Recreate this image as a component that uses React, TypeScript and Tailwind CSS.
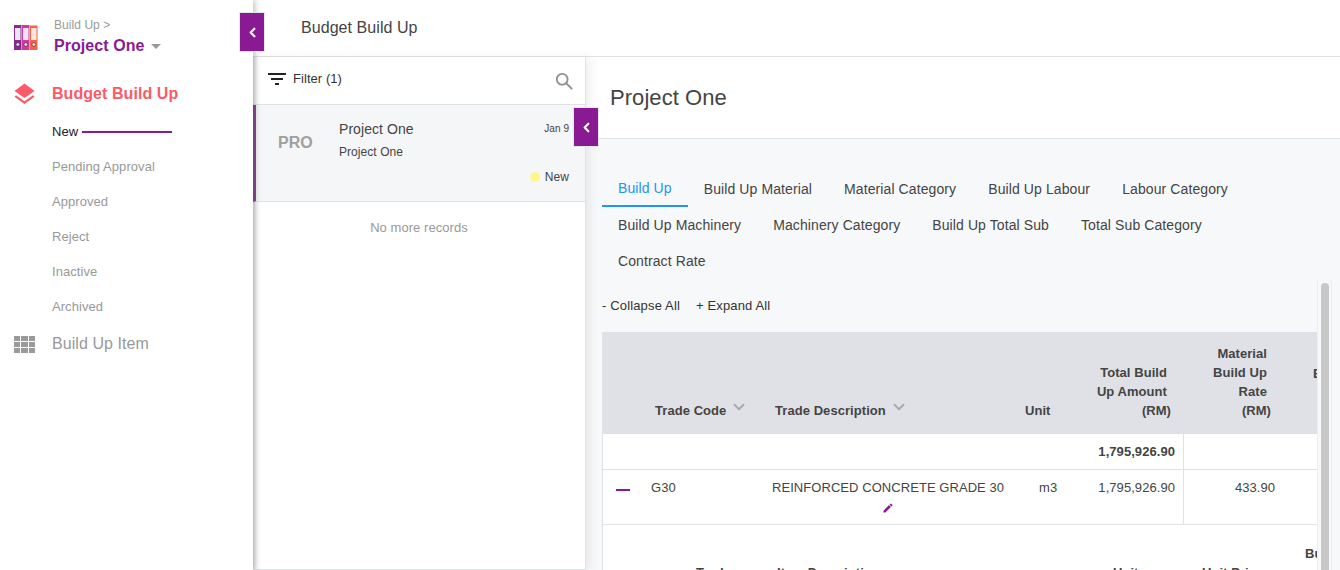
import { ChevronLeft, ChevronDown } from 'lucide-react'

const subItems = ['Pending Approval', 'Approved', 'Reject', 'Inactive', 'Archived']

const tabRows = [
  ['Build Up', 'Build Up Material', 'Material Category', 'Build Up Labour', 'Labour Category'],
  ['Build Up Machinery', 'Machinery Category', 'Build Up Total Sub', 'Total Sub Category'],
  ['Contract Rate'],
]

function CollapseButton() {
  return (
    <button className="w-[26px] h-[40px] flex items-center justify-center bg-[#8a1a94] border border-[#e4e6ea] text-white">
      <ChevronLeft size={15} strokeWidth={3.5} />
    </button>
  )
}

function BinderLogo() {
  return (
    <svg width="24" height="26" viewBox="0 0 24 26">
      <rect x="0" y="0" width="7.5" height="25" fill="#8a2a90" />
      <rect x="8" y="0" width="7.5" height="25" fill="#d03a9e" />
      <rect x="16" y="0.5" width="7.5" height="24.5" fill="#f2644a" />
      <rect x="1" y="3" width="5.5" height="12" fill="#e8e6f0" />
      <rect x="9" y="3" width="5.5" height="12" fill="#f0e4f0" />
      <rect x="17" y="3" width="5.5" height="12" fill="#f8e8e0" />
      <circle cx="3.8" cy="19.5" r="1.8" fill="#e5e5e5" stroke="#333" strokeWidth="0.6" />
      <circle cx="11.8" cy="19.5" r="1.8" fill="#e5e5e5" stroke="#333" strokeWidth="0.6" />
      <circle cx="19.8" cy="19.5" r="1.8" fill="#e5e5e5" stroke="#333" strokeWidth="0.6" />
    </svg>
  )
}

function Sidebar() {
  return (
    <aside className="w-[253px] shrink-0 bg-white shadow-[2px_0_6px_rgba(0,0,0,0.25)] z-20 relative">
      <div className="flex items-start pl-[14px] pt-[18px] h-[72px]">
        <div className="mt-[7px]">
          <BinderLogo />
        </div>
        <div className="ml-[16px]">
          <div className="text-[12px] leading-[14px] text-[#999]">Build Up &gt;</div>
          <div className="flex items-center mt-[4px]">
            <span className="text-[16px] leading-[20px] font-bold text-[#8a1a94]">Project One</span>
            <span className="ml-[7px] mt-[1px] w-0 h-0 border-x-[5px] border-x-transparent border-t-[5px] border-t-[#999]" />
          </div>
        </div>
      </div>

      <div className="flex items-center pl-[14px] mt-[10px] h-[24px]">
        <svg width="21" height="22" viewBox="0 0 21 22" fill="#fb5a66">
          <path d="M10.5 0.5 L20.5 8 L10.5 15 L0.5 8 Z" />
          <path d="M2 12.3 L0.5 13.7 L10.5 21 L20.5 13.7 L19 12.3 L10.5 18.3 Z" />
        </svg>
        <span className="ml-[17px] text-[16px] font-bold text-[#fb5a66]">Budget Build Up</span>
      </div>

      <div className="flex items-center pl-[52px] mt-[16px] h-[20px]">
        <span className="text-[13px] text-[#222]">New</span>
        <span className="ml-[4px] w-[90px] h-[2px] bg-[#8a1a94]" />
      </div>
      {subItems.map((item) => (
        <div key={item} className="pl-[52px] mt-[15px] h-[20px] flex items-center text-[13px] text-[#999]">
          {item}
        </div>
      ))}

      <div className="flex items-center pl-[14px] mt-[15px] h-[24px]">
        <div className="grid grid-cols-3 gap-[1px] w-[21px]">
          {Array.from({ length: 9 }).map((_, i) => (
            <span key={i} className="h-[5px] bg-[#9a9a9a]" />
          ))}
        </div>
        <span className="ml-[17px] text-[16px] text-[#999]">Build Up Item</span>
      </div>
    </aside>
  )
}

function ListPanel() {
  return (
    <section className="w-[333px] shrink-0 bg-white border-r border-b border-[#dfe2e6] shadow-[inset_6px_0_6px_-6px_rgba(0,0,0,0.2),5px_0_10px_rgba(0,0,0,0.06)] relative z-10 h-[513px]">
      <div className="h-[48px] flex items-center pl-[15px] pr-[12px] border-b border-[#dfe2e6]">
        <div className="flex items-center mb-[3px]">
          <svg width="18" height="12" viewBox="0 0 18 12" fill="#222">
            <rect x="0" y="0" width="18" height="2" />
            <rect x="3" y="5" width="12" height="2" />
            <rect x="7" y="10" width="4" height="2" />
          </svg>
          <span className="ml-[7px] text-[13px] text-[#333]">Filter (1)</span>
        </div>
        <svg className="ml-auto" width="18" height="18" viewBox="0 0 20 20" fill="none" stroke="#8f8f8f" strokeWidth="2">
          <circle cx="8" cy="8" r="6" />
          <path d="M12.5 12.5 L19 19" />
        </svg>
      </div>
      <div className="h-[97px] flex bg-[#f5f6f8] border-l-[3px] border-l-[#8e4a9a] border-b border-b-[#dfe2e6]">
        <div className="w-[83px] pt-[28px] pl-[22px] text-[16px] font-bold text-[#a0a0a0] leading-[20px]">PRO</div>
        <div className="flex-1 pt-[16px] pr-[16px]">
          <div className="flex justify-between">
            <span className="text-[14px] leading-[17px] text-[#444]">Project One</span>
            <span className="text-[10px] leading-[14px] mt-[1px] text-[#444]">Jan 9</span>
          </div>
          <div className="mt-[7px] text-[12px] leading-[14px] text-[#444]">Project One</div>
          <div className="flex items-center justify-end mt-[11px]">
            <span className="w-[10px] h-[10px] rounded-full bg-[#fdf68f]" />
            <span className="ml-[5px] text-[12px] leading-[14px] text-[#444]">New</span>
          </div>
        </div>
      </div>
      <div className="mt-[16px] text-center text-[13px] text-[#999]">No more records</div>
      <div className="absolute top-[50px] -right-[14px] z-20">
        <CollapseButton />
      </div>
    </section>
  )
}

function Tabs() {
  return (
    <div className="px-[16px] mt-[32px]">
      {tabRows.map((row, r) => (
        <div key={r} className="flex h-[36px]">
          {row.map((tab) => (
            <div
              key={tab}
              className={`px-[16px] h-[36px] flex items-center text-[14px] tracking-[0.1px] ${
                tab === 'Build Up' ? 'text-[#2196f3] border-b-2 border-[#2196f3]' : 'text-[#444]'
              }`}
            >
              {tab}
            </div>
          ))}
        </div>
      ))}
    </div>
  )
}

function BuildUpTable() {
  return (
    <div className="flex-1 min-w-0 overflow-hidden">
      <div className="w-[900px] text-[13px] text-[#444] border-l border-[#dfe2e6]">
        <div className="flex items-end h-[102px] bg-[#dfe1e6] font-bold text-[13px] leading-[19px] pb-[14px]">
          <div className="w-[52px]" />
          <div className="w-[120px] flex items-end">
            Trade Code
            <ChevronDown size={18} strokeWidth={2.5} className="ml-[4px] mb-[4px] text-[#aaa]" />
          </div>
          <div className="w-[250px] flex items-end">
            Trade Description
            <ChevronDown size={18} strokeWidth={2.5} className="ml-[4px] mb-[4px] text-[#aaa]" />
          </div>
          <div className="w-[50px]">Unit</div>
          <div className="w-[96px] text-right">
            <div className="mr-[4px]">Total Build</div>
            <div className="mr-[4px]">Up Amount</div>
            <div>(RM)</div>
          </div>
          <div className="w-[100px] text-right">
            <div className="mr-[4px]">Material</div>
            <div className="mr-[4px]">Build Up</div>
            <div className="mr-[4px]">Rate</div>
            <div>(RM)</div>
          </div>
          <div className="ml-[42px] self-center mb-[6px]">Bu</div>
        </div>
        <div className="flex h-[36px] items-center bg-white border-b border-[#dfe2e6]">
          <div className="w-[580px] text-right pr-[8px] font-bold">1,795,926.90</div>
          <div className="h-full border-l border-[#dfe2e6]" />
        </div>
        <div className="flex h-[55px] bg-white border-b border-[#dfe2e6]">
          <div className="w-[48px] pt-[19px] pl-[13px]">
            <div className="w-[14px] h-[2px] bg-[#8a1a94]" />
          </div>
          <div className="w-[121px] pt-[8px]">G30</div>
          <div className="w-[253px] pt-[8px]">
            <div>REINFORCED CONCRETE GRADE 30</div>
            <svg className="ml-[110px] mt-[4px]" width="12" height="12" viewBox="0 0 24 24" fill="#8a1a94">
              <path d="M3 17.25V21h3.75L17.81 9.94l-3.75-3.75L3 17.25zM20.71 7.04a1 1 0 0 0 0-1.41l-2.34-2.34a1 1 0 0 0-1.41 0l-1.83 1.83 3.75 3.75 1.83-1.83z" />
            </svg>
          </div>
          <div className="w-[50px] pt-[8px] pl-[14px]">m3</div>
          <div className="w-[108px] pt-[8px] text-right pr-[8px]">1,795,926.90</div>
          <div className="w-[120px] pt-[8px] border-l border-[#dfe2e6] text-right pr-[28px]">433.90</div>
        </div>
        <div className="bg-white h-[60px] relative font-bold text-[13px]">
          <span className="absolute left-[93px] top-[38px]">Trade</span>
          <span className="absolute left-[174px] top-[38px]">Item Description</span>
          <span className="absolute left-[510px] top-[38px]">Unit</span>
          <span className="absolute left-[599px] top-[38px]">Unit Price</span>
          <span className="absolute left-[702px] top-[19px]">Bu</span>
        </div>
      </div>
    </div>
  )
}

function MainPanel() {
  return (
    <main className="flex-1 min-w-0 bg-[#f7f8fa] h-[513px] overflow-hidden flex flex-col">
      <div className="h-[82px] shrink-0 bg-white border-b border-[#dfe2e6] flex items-center pl-[24px] text-[22px] text-[#444]">
        Project One
      </div>
      <Tabs />
      <div className="px-[16px] mt-[17px] flex text-[13px] tracking-[0.15px] text-[#333] h-[20px] items-center">
        <span>- Collapse All</span>
        <span className="ml-[16px]">+ Expand All</span>
      </div>
      <div className="flex flex-1 min-h-0 mt-[16px] pl-[16px]">
        <BuildUpTable />
        <div className="w-[23px] shrink-0 relative" />
      </div>
    </main>
  )
}

export default function App() {
  return (
    <div className="w-[1340px] h-[570px] overflow-hidden flex bg-white font-['Liberation_Sans',sans-serif] tracking-[0.06px] relative">
      <Sidebar />
      <div className="flex-1 min-w-0 flex flex-col">
        <header className="h-[57px] shrink-0 bg-white border-b border-[#dfe2e6] flex items-center pl-[48px] text-[16px] text-[#444] relative">
          <div className="absolute left-[-14px] top-[12px] z-30">
            <CollapseButton />
          </div>
          Budget Build Up
        </header>
        <div className="flex flex-1 min-h-0">
          <ListPanel />
          <MainPanel />
        </div>
      </div>
      <div className="absolute left-[1317px] top-[280px] w-[15px] h-[290px] pt-[3px] bg-[#f7f8fa] border-x border-[#eceef0] flex justify-center">
        <span className="w-[8px] h-full rounded-t-[4px] bg-[#c8c8c8]" />
      </div>
    </div>
  )
}
